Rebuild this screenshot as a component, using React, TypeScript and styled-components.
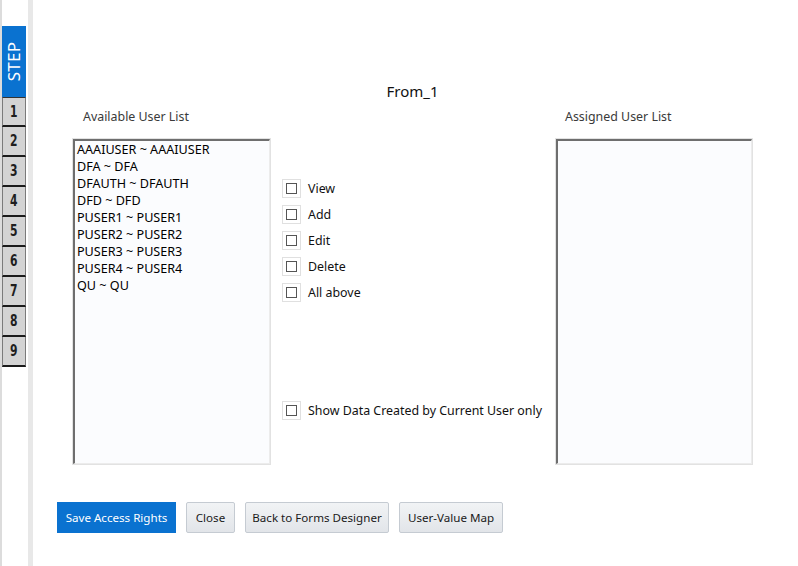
import React from "react";
import styled, { createGlobalStyle } from "styled-components";

const Global = createGlobalStyle`
  html, body { margin: 0; padding: 0; background: #ffffff; }
  body { font-family: "Noto Sans", "Open Sans", sans-serif; }
  * { box-sizing: border-box; }
`;

const Page = styled.div`
  display: flex;
  width: 798px;
  height: 566px;
  overflow: hidden;
  background: #ffffff;
`;

const Sidebar = styled.div`
  width: 33px;
  flex: none;
  border-left: 2px solid #dcdcdc;
  border-right: 5px solid #e8e8e8;
  padding-right: 2px;
  padding-top: 26px;
  display: flex;
  flex-direction: column;
`;

const StepTab = styled.div`
  height: 71px;
  background: #0a72d0;
  display: flex;
  align-items: center;
  justify-content: center;
`;

const StepText = styled.span`
  color: #ffffff;
  font-size: 17px;
  letter-spacing: 0.3px;
  transform: rotate(-90deg);
  white-space: nowrap;
`;

const NumTab = styled.div`
  height: 30px;
  background: #d3d3d3;
  border-left: 1px solid #7a7a7a;
  border-right: 1px solid #7a7a7a;
  border-top: 1px solid #333;
  border-bottom: 2px solid #1a1a1a;
  display: flex;
  align-items: center;
  justify-content: center;
  & + & { border-top: none; }
`;

const Digit = styled.span`
  display: inline-block;
  font-family: "DejaVu Sans Condensed", "DejaVu Sans", sans-serif;
  font-weight: bold;
  font-size: 15px;
  color: #1e1e1e;
  transform: scaleX(0.8);
`;

const Content = styled.div`
  flex: 1;
  display: flex;
  flex-direction: column;
  padding-left: 24px;
`;

const Form = styled.div`
  margin-left: 15px;
  width: 681px;
  display: flex;
  flex-direction: column;
`;

const Title = styled.div`
  margin-top: 81px;
  height: 20px;
  line-height: 20px;
  font-size: 15px;
  color: #111;
  text-align: center;
`;

const Grid = styled.div`
  display: grid;
  grid-template-columns: 199px 284px 198px;
  grid-template-rows: 31px 327px;
  margin-top: 6px;
`;

const ColLabel = styled.div<{ $indent: number }>`
  padding-left: ${(p) => p.$indent}px;
  font-size: 12.4px;
  line-height: 16px;
  padding-top: 2px;
  color: #3a3a3a;
`;

const ListBox = styled.div`
  border: 1px solid #e2e2e2;
  height: 100%;
`;

const ListInner = styled.div`
  height: 100%;
  background: #fbfcfe;
  border-top: 2px solid #6e6e6e;
  border-left: 2px solid #6e6e6e;
  border-right: 1px solid #ececec;
  border-bottom: 1px solid #ececec;
  padding: 0 0 0 2px;
`;

const ListItem = styled.div`
  font-size: 12.6px;
  line-height: 17px;
  color: #000;
  white-space: nowrap;
`;

const Options = styled.div`
  display: flex;
  flex-direction: column;
  gap: 7px;
  padding-top: 41px;
  padding-left: 11px;
`;

const OptionRow = styled.label<{ $gapTop?: number }>`
  display: flex;
  align-items: center;
  height: 19px;
  margin-top: ${(p) => p.$gapTop ?? 0}px;
  font-size: 12.4px;
  color: #111;
  white-space: nowrap;
`;

const BoxFrame = styled.span`
  width: 19px;
  height: 19px;
  border: 1px solid #e0e0e0;
  display: flex;
  align-items: center;
  justify-content: center;
  margin-right: 7px;
  flex: none;
`;

const Box = styled.span`
  width: 11px;
  height: 11px;
  border: 1px solid #555;
  background: #fff;
`;

const Buttons = styled.div`
  display: flex;
  gap: 10px;
  margin-top: 37px;
`;

const Button = styled.button<{ $primary?: boolean; $w: number }>`
  width: ${(p) => p.$w}px;
  height: 31px;
  padding: 0;
  font-family: "Noto Sans", "Open Sans", sans-serif;
  font-size: 11.6px;
  border-radius: ${(p) => (p.$primary ? "0" : "2px")};
  border: 1px solid ${(p) => (p.$primary ? "#0a72d0" : "#c5cbd2")};
  background: ${(p) =>
    p.$primary ? "#0a72d0" : "linear-gradient(#f1f3f5, #e2e5e9)"};
  color: ${(p) => (p.$primary ? "#ffffff" : "#1a1a1a")};
  white-space: nowrap;
  cursor: pointer;
`;

const users = [
  "AAAIUSER ~ AAAIUSER",
  "DFA ~ DFA",
  "DFAUTH ~ DFAUTH",
  "DFD ~ DFD",
  "PUSER1 ~ PUSER1",
  "PUSER2 ~ PUSER2",
  "PUSER3 ~ PUSER3",
  "PUSER4 ~ PUSER4",
  "QU ~ QU",
];

const rights = ["View", "Add", "Edit", "Delete", "All above"];

export default function App() {
  return (
    <>
      <Global />
      <Page>
        <Sidebar>
          <StepTab>
            <StepText>STEP</StepText>
          </StepTab>
          {[1, 2, 3, 4, 5, 6, 7, 8, 9].map((n) => (
            <NumTab key={n}>
              <Digit>{n}</Digit>
            </NumTab>
          ))}
        </Sidebar>
        <Content>
          <Form>
            <Title>From_1</Title>
            <Grid>
              <ColLabel $indent={11}>Available User List</ColLabel>
              <div />
              <ColLabel $indent={10}>Assigned User List</ColLabel>
              <ListBox>
                <ListInner>
                  {users.map((u) => (
                    <ListItem key={u}>{u}</ListItem>
                  ))}
                </ListInner>
              </ListBox>
              <Options>
                {rights.map((r) => (
                  <OptionRow key={r}>
                    <BoxFrame>
                      <Box />
                    </BoxFrame>
                    {r}
                  </OptionRow>
                ))}
                <OptionRow $gapTop={92}>
                  <BoxFrame>
                    <Box />
                  </BoxFrame>
                  Show Data Created by Current User only
                </OptionRow>
              </Options>
              <ListBox>
                <ListInner />
              </ListBox>
            </Grid>
          </Form>
          <Buttons>
            <Button $primary $w={119}>Save Access Rights</Button>
            <Button $w={49}>Close</Button>
            <Button $w={144}>Back to Forms Designer</Button>
            <Button $w={104}>User-Value Map</Button>
          </Buttons>
        </Content>
      </Page>
    </>
  );
}
